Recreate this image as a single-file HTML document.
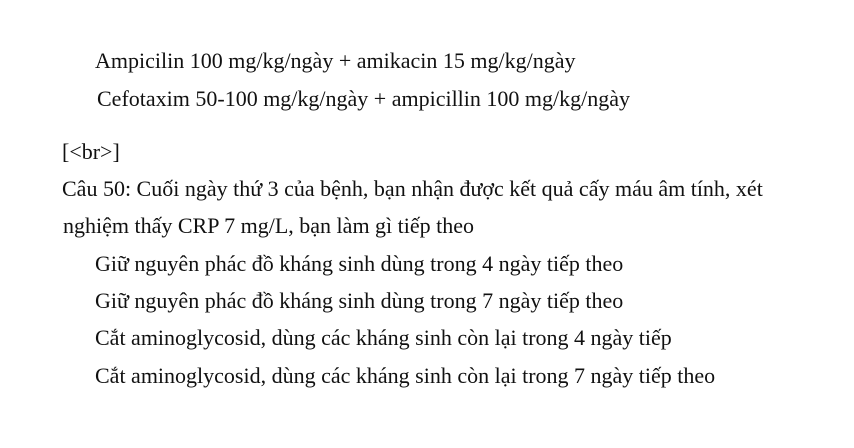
<!DOCTYPE html>
<html><head><meta charset="utf-8"><style>
body{margin:0;width:854px;height:448px;background:#fff;overflow:hidden;position:relative;font-family:"Liberation Serif","Noto Serif CJK SC",serif;font-size:22px;color:#111;}
div{position:absolute;white-space:nowrap;line-height:20px;}
</style></head><body>
<div style="left:95px;top:51px">Ampicilin 100 mg/kg/ngày + amikacin 15 mg/kg/ngày</div>
<div style="left:97px;top:89px">Cefotaxim 50-100 mg/kg/ngày + ampicillin 100 mg/kg/ngày</div>
<div style="left:62px;top:142px">[&lt;br&gt;]</div>
<div style="left:62px;top:179px">Câu 50: Cuối ngày thứ 3 của bệnh, bạn nhận được kết quả cấy máu âm tính, xét</div>
<div style="left:63px;top:216px">nghiệm thấy CRP 7 mg/L, bạn làm gì tiếp theo</div>
<div style="left:95px;top:254px">Giữ nguyên phác đồ kháng sinh dùng trong 4 ngày tiếp theo</div>
<div style="left:95px;top:291px">Giữ nguyên phác đồ kháng sinh dùng trong 7 ngày tiếp theo</div>
<div style="left:95px;top:328px">Cắt aminoglycosid, dùng các kháng sinh còn lại trong 4 ngày tiếp</div>
<div style="left:95px;top:366px">Cắt aminoglycosid, dùng các kháng sinh còn lại trong 7 ngày tiếp theo</div>
</body></html>
